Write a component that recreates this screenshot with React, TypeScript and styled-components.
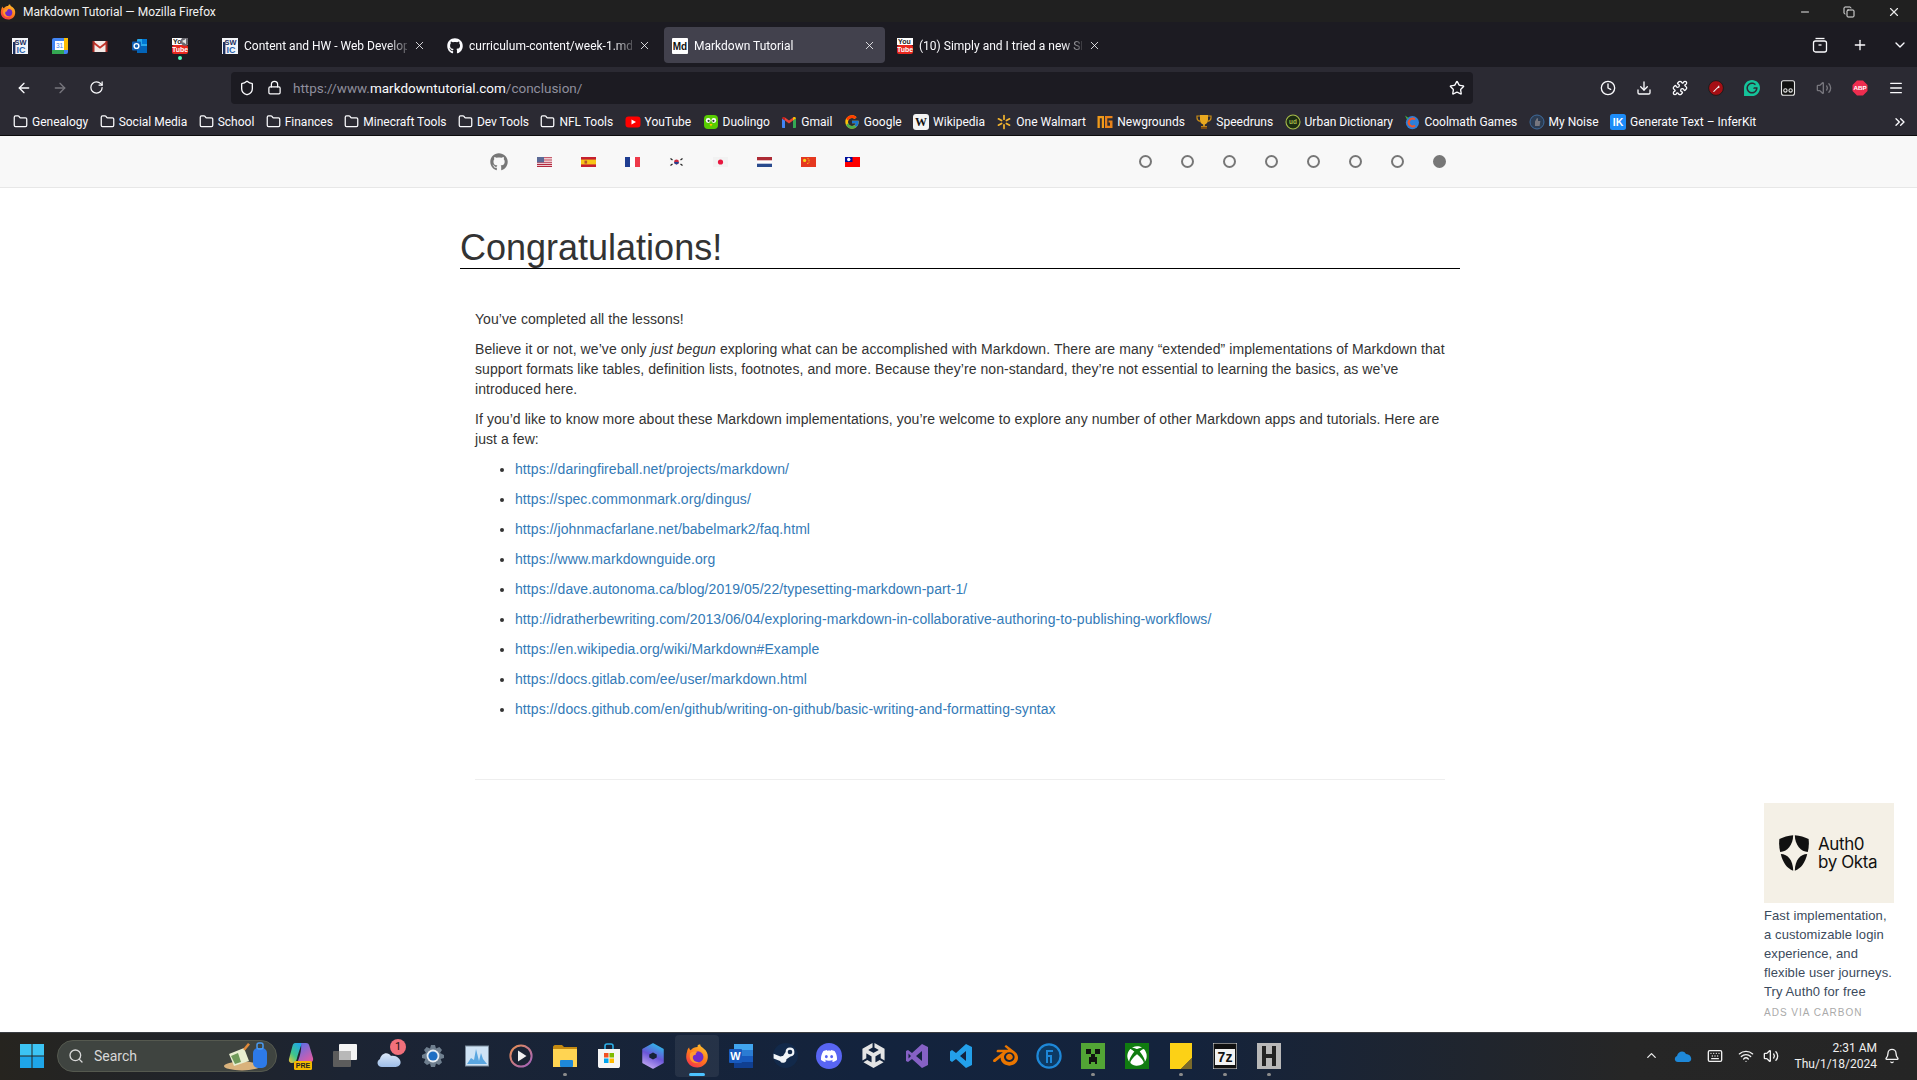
import type { ReactNode } from "react";
import styled, { createGlobalStyle } from "styled-components";
import {
  ArrowLeft,
  ArrowRight,
  Bell,
  ChevronDown,
  ChevronUp,
  ChevronsRight,
  Clock,
  Copy,
  Download,
  Folder,
  Keyboard,
  Lock,
  Menu,
  Minus,
  Plus,
  Puzzle,
  RotateCw,
  Search,
  Shield,
  Star,
  Volume2,
  Wifi,
  X,
} from "lucide-react";
import { FaGithub, FaXbox } from "react-icons/fa";
import { FcGoogle } from "react-icons/fc";
import { SiBlender, SiDiscord, SiGrammarly, SiUnity } from "react-icons/si";

const LINKS = [
  "https://daringfireball.net/projects/markdown/",
  "https://spec.commonmark.org/dingus/",
  "https://johnmacfarlane.net/babelmark2/faq.html",
  "https://www.markdownguide.org",
  "https://dave.autonoma.ca/blog/2019/05/22/typesetting-markdown-part-1/",
  "http://idratherbewriting.com/2013/06/04/exploring-markdown-in-collaborative-authoring-to-publishing-workflows/",
  "https://en.wikipedia.org/wiki/Markdown#Example",
  "https://docs.gitlab.com/ee/user/markdown.html",
  "https://docs.github.com/en/github/writing-on-github/basic-writing-and-formatting-syntax",
];

const DiscordBadge = styled.div`
  width: 26px;
  height: 26px;
  border-radius: 50%;
  background: #5865f2;
  display: flex;
  align-items: center;
  justify-content: center;
`;

const XboxTile = styled.div`
  width: 24px;
  height: 26px;
  background: #107c10;
  display: flex;
  align-items: center;
  justify-content: center;
`;

function Svg({ size = 16, children }: { size?: number; children: ReactNode }) {
  return (
    <svg width={size} height={size} viewBox="0 0 16 16">
      {children}
    </svg>
  );
}

function FirefoxLogo({ size = 16 }: { size?: number }) {
  return (
    <Svg size={size}>
      <defs>
        <linearGradient id="ffBody" x1="0.8" y1="0" x2="0.2" y2="1">
          <stop offset="0" stopColor="#ffc42e" />
          <stop offset="0.5" stopColor="#ff7a1a" />
          <stop offset="1" stopColor="#f5304f" />
        </linearGradient>
      </defs>
      <path d="M1.4 5 C1.6 3.6 2.2 2.8 2.8 2.4 C2.8 3.4 3.2 4 3.8 4.2 C5 2.6 6.6 2 8.4 2 C8 0.8 9 0.4 10.2 0.4 C10 1.4 11 2 12.4 3 C14.4 4.4 15.4 6.6 15.2 9 C15 12.8 12 15.6 8.2 15.6 C4 15.6 0.8 12.4 0.8 8.6 C0.8 7.2 1 6 1.4 5Z" fill="url(#ffBody)" />
      <circle cx="8.6" cy="8.6" r="3.7" fill="#6f2bc9" />
      <path d="M3.6 6 C5 5 6.8 4.8 8.4 5.2 C7.2 5.8 7 6.6 7.2 7.2 C6 7.2 5 8 5.2 9.4 C5.4 11.2 7.4 12.4 9.4 12 C8 13.4 4.8 12.8 3.6 10.4 C3 9 3 7.2 3.6 6Z" fill="#ff9a2e" />
    </Svg>
  );
}

function SwicIcon() {
  return (
    <Svg>
      <rect width="16" height="16" fill="#f2f4f8" />
      <text x="8.5" y="6.6" textAnchor="middle" fontSize="7.4" fontWeight="700" fontFamily="Liberation Sans, sans-serif" fill="#1c2f5e">SW</text>
      <rect x="1" y="4" width="2.4" height="12" fill="#1c2f5e" />
      <text x="9" y="14.6" textAnchor="middle" fontSize="9" fontWeight="700" fontFamily="Liberation Sans, sans-serif" fill="#2b63ad">IC</text>
    </Svg>
  );
}

function CalendarIcon() {
  return (
    <Svg>
      <rect width="16" height="16" rx="2" fill="#4285f4" />
      <rect x="12" width="4" height="12" fill="#fbbc04" />
      <rect y="12" width="12" height="4" fill="#34a853" />
      <rect x="3" y="3" width="9" height="9" fill="#fff" />
      <text x="7.5" y="10.2" textAnchor="middle" fontSize="6.5" fontFamily="Liberation Sans, sans-serif" fill="#4285f4">31</text>
    </Svg>
  );
}

function GmailRedIcon() {
  return (
    <Svg>
      <rect x="1" y="3" width="14" height="11" fill="#f3e9e6" />
      <path d="M1 3 L8 8.6 L15 3 L15 5.4 L8 10.8 L1 5.4Z" fill="#c5352b" />
      <rect x="0.5" y="3" width="2" height="11" fill="#a62c25" />
      <rect x="13.5" y="3" width="2" height="11" fill="#a62c25" />
    </Svg>
  );
}

function OutlookIcon() {
  return (
    <Svg>
      <rect x="5" y="1" width="10" height="14" rx="1" fill="#28a8ea" />
      <rect x="10" y="1" width="5" height="5" fill="#0078d4" />
      <rect x="5" y="8" width="10" height="7" fill="#0364b8" />
      <rect y="3.5" width="9" height="9" rx="1" fill="#0f5fb3" />
      <circle cx="4.5" cy="8" r="2.4" fill="none" stroke="#fff" strokeWidth="1.4" />
    </Svg>
  );
}

function YouTubeOldIcon({ speaker }: { speaker?: boolean }) {
  return (
    <Svg>
      <rect width="16" height="7" fill="#fff" />
      <text x="1" y="6.4" fontSize="7" fontWeight="700" fontFamily="Liberation Sans, sans-serif" fill="#222">You</text>
      <rect y="7" width="16" height="9" rx="2" fill="#e8271e" />
      <text x="8" y="14" textAnchor="middle" fontSize="7" fontWeight="700" fontFamily="Liberation Sans, sans-serif" fill="#fff">Tube</text>
      {speaker && (
        <g>
          <circle cx="13" cy="3.4" r="4.4" fill="#6a6970" />
          <path d="M10.6 2.2 H12 L14 0.6 V6.2 L12 4.6 H10.6Z" fill="#e6e6e6" />
        </g>
      )}
    </Svg>
  );
}

function MdIcon() {
  return (
    <Svg>
      <rect width="16" height="16" rx="1" fill="#fff" />
      <text x="8" y="12" textAnchor="middle" fontSize="10" fontWeight="700" fontFamily="Liberation Sans, sans-serif" fill="#111">Md</text>
    </Svg>
  );
}

function YoutubeBookmark() {
  return (
    <Svg>
      <rect x="0.5" y="2.5" width="15" height="11" rx="3" fill="#f00" />
      <path d="M6.5 5.5 L11 8 L6.5 10.5Z" fill="#fff" />
    </Svg>
  );
}

function DuolingoIcon() {
  return (
    <Svg>
      <rect x="1" y="1" width="14" height="14" rx="4" fill="#58cc02" />
      <circle cx="5.2" cy="6.5" r="2.4" fill="#fff" />
      <circle cx="10.8" cy="6.5" r="2.4" fill="#fff" />
      <circle cx="5.6" cy="6.8" r="1.1" fill="#333" />
      <circle cx="10.4" cy="6.8" r="1.1" fill="#333" />
      <path d="M6.5 10 H9.5 L8 12.5Z" fill="#ffc800" />
    </Svg>
  );
}

function GmailIcon() {
  return (
    <Svg>
      <path d="M1 4.5 L4 6.5 V14 H2 C1.4 14 1 13.6 1 13Z" fill="#4285f4" />
      <path d="M15 4.5 L12 6.5 V14 H14 C14.6 14 15 13.6 15 13Z" fill="#34a853" />
      <path d="M4 6.5 L8 9.5 L12 6.5 V3.5 L8 6.5 L4 3.5Z" fill="#ea4335" />
      <path d="M1 4.5 C1 3 3 2.6 4 3.5 V6.5Z" fill="#c5221f" />
      <path d="M15 4.5 C15 3 13 2.6 12 3.5 V6.5Z" fill="#fbbc04" />
    </Svg>
  );
}

function WikipediaIcon() {
  return (
    <Svg>
      <rect width="16" height="16" rx="3" fill="#f4f4f4" />
      <text x="8" y="12.4" textAnchor="middle" fontSize="12" fontFamily="Liberation Serif, serif" fontWeight="700" fill="#111">W</text>
    </Svg>
  );
}

function WalmartIcon() {
  return (
    <Svg>
      <g stroke="#f5b52e" strokeWidth="1.7" strokeLinecap="round">
        <path d="M8 1.5 V5.2" />
        <path d="M8 10.8 V14.5" />
        <path d="M2.4 4.8 L5.6 6.6" />
        <path d="M10.4 9.4 L13.6 11.2" />
        <path d="M2.4 11.2 L5.6 9.4" />
        <path d="M10.4 6.6 L13.6 4.8" />
      </g>
    </Svg>
  );
}

function NewgroundsIcon() {
  return (
    <Svg>
      <path d="M0.5 2 H7 V14 H4.8 V4.2 H2.8 V14 H0.5Z" fill="#f09a1a" />
      <path d="M8 2 H15.5 V4.2 H10.3 V11.8 H13 V8.5 H11.6 V6.6 H15.5 V14 H8Z" fill="#e8821a" />
    </Svg>
  );
}

function TrophyIcon() {
  return (
    <Svg>
      <path d="M4 1 H12 V6 C12 9 10 10 8.8 10.4 V12 H11 V15 H5 V12 H7.2 V10.4 C6 10 4 9 4 6Z" fill="#e8a820" />
      <path d="M4 2 H1 V4 C1 6 2.4 7 4.4 7.4 M12 2 H15 V4 C15 6 13.6 7 11.6 7.4" fill="none" stroke="#c98c18" strokeWidth="1.2" />
      <rect x="5" y="12.6" width="6" height="2.4" fill="#7a4a12" />
    </Svg>
  );
}

function UrbanIcon() {
  return (
    <Svg>
      <circle cx="8" cy="8" r="7" fill="#1d2d12" stroke="#a7bc4a" strokeWidth="1.1" />
      <text x="8" y="10.4" textAnchor="middle" fontSize="6.4" fontFamily="Liberation Sans, sans-serif" fontWeight="700" fill="#a7bc4a">ud</text>
    </Svg>
  );
}

function CoolmathIcon() {
  return (
    <Svg>
      <circle cx="8.4" cy="8.6" r="6.6" fill="#2d7fd8" />
      <path d="M1 1.5 L4.5 4 L3 5.5Z" fill="#46b04a" />
      <path d="M11 5.6 A3.8 3.8 0 1 0 11 11.4" fill="none" stroke="#f0542a" strokeWidth="2" />
    </Svg>
  );
}

function MyNoiseIcon() {
  return (
    <Svg>
      <circle cx="8" cy="8" r="7" fill="#2c3c52" stroke="#3e6a9c" strokeWidth="1" />
      <path d="M6 12 V7.5 L8 4 L9 4.5 V7 H11.4 L10.6 12Z" fill="#77777f" />
    </Svg>
  );
}

function InferKitIcon() {
  return (
    <Svg>
      <rect width="16" height="16" rx="2.5" fill="#1d8cf8" />
      <text x="8" y="12" textAnchor="middle" fontSize="10.5" fontWeight="700" fontFamily="Liberation Sans, sans-serif" fill="#fff">IK</text>
    </Svg>
  );
}

function PocketIcon() {
  return (
    <Svg>
      <rect x="1.5" y="0.8" width="13" height="14.4" rx="2" fill="#111" stroke="#e8e8e8" strokeWidth="1.1" />
      <circle cx="5.4" cy="10.4" r="1.7" fill="none" stroke="#e8e8e8" strokeWidth="1.1" />
      <circle cx="10.6" cy="10.4" r="1.7" fill="none" stroke="#e8e8e8" strokeWidth="1.1" />
    </Svg>
  );
}

function RedExtensionIcon() {
  return (
    <Svg>
      <circle cx="8" cy="8" r="7.4" fill="#a50e14" stroke="#1c1c1c" strokeWidth="1" />
      <path d="M5 11.5 L9.5 7 L11 5.2 L11.6 7.6 L9.4 8.4 L6 12Z" fill="#f3f3f3" />
    </Svg>
  );
}

function AbpIcon() {
  return (
    <Svg>
      <path d="M5 0.5 H11 L15.5 5 V11 L11 15.5 H5 L0.5 11 V5Z" fill="#ee2d4f" />
      <text x="8" y="10.4" textAnchor="middle" fontSize="6.2" fontWeight="700" fontFamily="Liberation Sans, sans-serif" fill="#fff">ABP</text>
    </Svg>
  );
}

function Flag({ code }: { code: string }) {
  const flags: Record<string, ReactNode> = {
    us: (
      <>
        <rect width="15" height="10" fill="#fff" />
        <path d="M0 0.8 H15 M0 3 H15 M0 5.2 H15 M0 7.4 H15 M0 9.4 H15" stroke="#b3283f" strokeWidth="1.1" />
        <rect width="7" height="5.4" fill="#5c6a96" />
      </>
    ),
    es: (
      <>
        <rect width="15" height="10" fill="#c6202e" />
        <rect y="2.6" width="15" height="4.8" fill="#f7c518" />
        <rect x="3.5" y="3.6" width="2.6" height="3" fill="#b5552a" />
      </>
    ),
    fr: (
      <>
        <rect width="15" height="10" fill="#fff" />
        <rect width="5" height="10" fill="#1f3d91" />
        <rect x="10" width="5" height="10" fill="#ee3a4a" />
      </>
    ),
    kr: (
      <>
        <rect width="15" height="10" fill="#f7f7f7" />
        <circle cx="7.5" cy="5" r="2.4" fill="#c8283e" />
        <path d="M5.1 5 A2.4 2.4 0 0 0 9.9 5Z" fill="#23408f" />
        <path d="M1.5 1.5 L3.5 3 M11.5 3 L13.5 1.5 M1.5 8.5 L3.5 7 M11.5 7 L13.5 8.5" stroke="#222" strokeWidth="1.2" />
      </>
    ),
    jp: (
      <>
        <rect width="15" height="10" fill="#f2f2f2" />
        <circle cx="7.5" cy="5" r="2.6" fill="#e8173f" />
      </>
    ),
    nl: (
      <>
        <rect width="15" height="10" fill="#fff" />
        <rect width="15" height="3.3" fill="#ad2b35" />
        <rect y="6.7" width="15" height="3.3" fill="#2a4b8e" />
      </>
    ),
    cn: (
      <>
        <rect width="15" height="10" fill="#e5381f" />
        <circle cx="3.6" cy="3.4" r="1.6" fill="#f7d618" />
        <circle cx="7" cy="1.6" r="0.6" fill="#f7d618" />
        <circle cx="8" cy="3.2" r="0.6" fill="#f7d618" />
        <circle cx="8" cy="5" r="0.6" fill="#f7d618" />
        <circle cx="6.8" cy="6.4" r="0.6" fill="#f7d618" />
      </>
    ),
    tw: (
      <>
        <rect width="15" height="10" fill="#fe0000" />
        <rect width="7.5" height="5" fill="#000f9c" />
        <circle cx="3.75" cy="2.5" r="1.7" fill="#fff" />
      </>
    ),
  };
  return (
    <svg width="15" height="10" viewBox="0 0 15 10">
      {flags[code]}
    </svg>
  );
}

function Auth0Shield() {
  return (
    <svg width="30" height="36" viewBox="0 0 30 36">
      <path d="M14.2 0.2 C9 0.8 4.4 2 0.4 4 C-0.2 9 0.2 13 1.2 17 C8 16.6 14 10 14.2 0.2Z" fill="#111" />
      <path d="M15.8 0.2 C21 0.8 25.6 2 29.6 4 C30.2 9 29.8 13 28.8 17 C22 16.6 16 10 15.8 0.2Z" fill="#111" />
      <path d="M1.8 19 C8.8 19.2 14 25 14.2 35.8 C8 33.4 3.6 27.4 1.8 19Z" fill="#111" />
      <path d="M28.2 19 C21.2 19.2 16 25 15.8 35.8 C22 33.4 26.4 27.4 28.2 19Z" fill="#111" />
    </svg>
  );
}

const PINNED = [<SwicIcon key="a" />, <CalendarIcon key="b" />, <GmailRedIcon key="c" />, <OutlookIcon key="d" />, <YouTubeOldIcon key="e" speaker />];

const TABS: { title: string; icon: ReactNode; active?: boolean }[] = [
  { title: "Content and HW - Web Develop", icon: <SwicIcon /> },
  { title: "curriculum-content/week-1.md", icon: <FaGithub size={16} color="#fbfbfe" /> },
  { title: "Markdown Tutorial", icon: <MdIcon />, active: true },
  { title: "(10) Simply and I tried a new SM", icon: <YouTubeOldIcon /> },
];

const BOOKMARKS: { label: string; icon: ReactNode }[] = [
  { label: "Genealogy", icon: <Folder size={15} /> },
  { label: "Social Media", icon: <Folder size={15} /> },
  { label: "School", icon: <Folder size={15} /> },
  { label: "Finances", icon: <Folder size={15} /> },
  { label: "Minecraft Tools", icon: <Folder size={15} /> },
  { label: "Dev Tools", icon: <Folder size={15} /> },
  { label: "NFL Tools", icon: <Folder size={15} /> },
  { label: "YouTube", icon: <YoutubeBookmark /> },
  { label: "Duolingo", icon: <DuolingoIcon /> },
  { label: "Gmail", icon: <GmailIcon /> },
  { label: "Google", icon: <FcGoogle size={16} /> },
  { label: "Wikipedia", icon: <WikipediaIcon /> },
  { label: "One Walmart", icon: <WalmartIcon /> },
  { label: "Newgrounds", icon: <NewgroundsIcon /> },
  { label: "Speedruns", icon: <TrophyIcon /> },
  { label: "Urban Dictionary", icon: <UrbanIcon /> },
  { label: "Coolmath Games", icon: <CoolmathIcon /> },
  { label: "My Noise", icon: <MyNoiseIcon /> },
  { label: "Generate Text – InferKit", icon: <InferKitIcon /> },
];

const TASKBAR: { icon: ReactNode; dot?: boolean; active?: boolean; badge?: boolean }[] = [
  {
    icon: (
      <svg width="26" height="30" viewBox="0 0 26 30">
        <defs>
          <linearGradient id="copLeft" x1="0.8" y1="0" x2="0.1" y2="1">
            <stop offset="0" stopColor="#1fa3e8" />
            <stop offset="0.6" stopColor="#3fc68a" />
            <stop offset="1" stopColor="#e8c53a" />
          </linearGradient>
          <linearGradient id="copRight" x1="0.2" y1="0" x2="0.8" y2="1">
            <stop offset="0" stopColor="#5a6fe8" />
            <stop offset="1" stopColor="#e85aa0" />
          </linearGradient>
        </defs>
        <path d="M7 2 H14 C12 7 10 13 8.5 19 C8 21 6 22 4 22 C1.5 22 0.4 20 1 18 L4.6 4.6 C5 3 6 2 7 2Z" fill="url(#copLeft)" />
        <path d="M13 2 H18 C20 2 21 3 21.4 5 L25 17 C25.6 19.6 24 22 21 22 H9 C11 18 14 10 13 2Z" fill="url(#copRight)" />
        <rect x="6" y="20" width="18" height="9" rx="1.5" fill="#f5b800" />
        <text x="15" y="27" textAnchor="middle" fontSize="7" fontWeight="700" fontFamily="Liberation Sans, sans-serif" fill="#222">PRE</text>
      </svg>
    ),
  },
  {
    icon: (
      <svg width="26" height="26" viewBox="0 0 26 26">
        <rect x="7" y="1" width="18" height="16" rx="1" fill="#f4f4f4" />
        <rect x="1" y="8" width="18" height="16" rx="1" fill="#5c5c5c" />
        <rect x="7" y="8" width="12" height="9" fill="#b8b8b8" />
      </svg>
    ),
  },
  {
    badge: true,
    icon: (
      <svg width="26" height="26" viewBox="0 0 26 26">
        <defs>
          <linearGradient id="cloudFill" x1="0" y1="0" x2="0" y2="1">
            <stop offset="0" stopColor="#dbe8f8" />
            <stop offset="1" stopColor="#9dbde8" />
          </linearGradient>
        </defs>
        <path d="M6 24 C1 24 0 18 4 16 C5 10 12 8 15 13 C20 12 25 16 24.6 20 C24 23 21 24 19 24Z" fill="url(#cloudFill)" />
      </svg>
    ),
  },
  {
    icon: (
      <svg width="24" height="24" viewBox="0 0 24 24">
        <path d="M10 1 H14 L15 4.4 L18.4 3 L21 6 L19 9 L23 11 V14 L19.6 15 L21 18.4 L18 21 L15 19.4 L14 23 H10 L9 19.4 L6 21 L3 18.4 L4.4 15 L1 14 V11 L5 9 L3 6 L5.6 3 L9 4.4Z" fill="#6f7f8f" />
        <circle cx="12" cy="12" r="6.4" fill="#e8eef4" />
        <circle cx="12" cy="12" r="4.6" fill="#1f6fc4" />
      </svg>
    ),
  },
  {
    icon: (
      <svg width="24" height="24" viewBox="0 0 24 24">
        <rect x="0.5" y="2" width="23" height="20" fill="#cfe3f5" stroke="#7b8b9c" />
        <path d="M2 20 L6 14 L9 16 L11 5 L14 17 L16 9 L18 15 L22 20Z" fill="#5aa6e0" />
      </svg>
    ),
  },
  {
    icon: (
      <svg width="24" height="24" viewBox="0 0 24 24">
        <defs>
          <linearGradient id="playRing" x1="0" y1="0" x2="1" y2="1">
            <stop offset="0" stopColor="#e89050" />
            <stop offset="1" stopColor="#a060c0" />
          </linearGradient>
        </defs>
        <circle cx="12" cy="12" r="10.6" fill="#1a2333" stroke="url(#playRing)" strokeWidth="2" />
        <path d="M9 6.5 L17.5 12 L9 17.5Z" fill="#f0f0f0" />
      </svg>
    ),
  },
  {
    dot: true,
    icon: (
      <svg width="26" height="26" viewBox="0 0 26 26">
        <path d="M1 4 C1 3 2 2 3 2 H10 L12 4 H25 V24 H1Z" fill="#c58a10" />
        <rect x="1" y="6" width="24" height="18" fill="#ffd452" />
        <rect x="8" y="17" width="13" height="7" rx="1" fill="#1e88d8" />
      </svg>
    ),
  },
  {
    icon: (
      <svg width="24" height="26" viewBox="0 0 24 26">
        <path d="M8 6 V3 C8 1.5 9 1 10 1 H14 C15 1 16 1.5 16 3 V6" fill="none" stroke="#2cb0e8" strokeWidth="1.6" />
        <path d="M1 6 H23 V23 C23 24.4 22 25 21 25 H3 C2 25 1 24.4 1 23Z" fill="#f5f5f5" />
        <rect x="7" y="10" width="4.5" height="4.5" fill="#f25022" />
        <rect x="12.5" y="10" width="4.5" height="4.5" fill="#7fba00" />
        <rect x="7" y="15.5" width="4.5" height="4.5" fill="#00a4ef" />
        <rect x="12.5" y="15.5" width="4.5" height="4.5" fill="#ffb900" />
      </svg>
    ),
  },
  {
    icon: (
      <svg width="24" height="26" viewBox="0 0 24 26">
        <defs>
          <linearGradient id="m365" x1="0.7" y1="0" x2="0.3" y2="1">
            <stop offset="0" stopColor="#2fb6e8" />
            <stop offset="0.5" stopColor="#6a55d8" />
            <stop offset="1" stopColor="#c0a6f2" />
          </linearGradient>
        </defs>
        <path d="M12 1 L22 6.5 V19.5 L12 25 L2 19.5 V6.5Z M12 8.5 L7.5 11 V15 L12 17.5 L16.5 15 V11Z" fill="url(#m365)" fillRule="evenodd" stroke="url(#m365)" strokeWidth="1.5" strokeLinejoin="round" />
      </svg>
    ),
  },
  { active: true, icon: <FirefoxLogo size={24} /> },
  {
    icon: (
      <svg width="26" height="26" viewBox="0 0 26 26">
        <rect x="6" y="1" width="19" height="24" rx="1.5" fill="#2b7cd3" />
        <rect x="6" y="1" width="19" height="6" fill="#41a5ee" />
        <rect x="6" y="13" width="19" height="6" fill="#185abd" />
        <rect x="6" y="19" width="19" height="6" fill="#103f91" />
        <rect x="1" y="6" width="13" height="14" rx="1" fill="#185abd" />
        <text x="7.5" y="17" textAnchor="middle" fontSize="11" fontWeight="700" fontFamily="Liberation Sans, sans-serif" fill="#fff">W</text>
      </svg>
    ),
  },
  {
    icon: (
      <svg width="25" height="25" viewBox="0 0 25 25">
        <circle cx="12.5" cy="12.5" r="12.5" fill="#12294a" />
        <path d="M0.6 15.5 L7 18 A3.4 3.4 0 0 0 13.4 16.2 L17.4 13.4 A4.4 4.4 0 1 0 12.6 9 L10 13 A3.4 3.4 0 0 0 7.4 13.6 L0.6 10.8Z" fill="#f0f4f8" />
        <circle cx="17" cy="9" r="2.3" fill="#12294a" />
      </svg>
    ),
  },
  {
    icon: (
      <DiscordBadge>
        <SiDiscord size={16} color="#fff" />
      </DiscordBadge>
    ),
  },
  { icon: <SiUnity size={25} color="#e4e4e4" /> },
  {
    icon: (
      <svg width="24" height="26" viewBox="0 0 24 26">
        <path d="M17 1 L23 4 V22 L17 25 L7 16 L3 19 L1 18 V8 L3 7 L7 10Z M17 8 L11 13 L17 18Z M3.5 10.5 V15.5 L6 13Z" fill="#8661c5" fillRule="evenodd" />
      </svg>
    ),
  },
  {
    icon: (
      <svg width="24" height="26" viewBox="0 0 24 26">
        <path d="M17 1 L23 4 V22 L17 25 L7 16 L3 19 L1 17.5 V8.5 L3 7 L7 10Z M17 8 L11 13 L17 18Z" fill="#23a0ea" fillRule="evenodd" />
      </svg>
    ),
  },
  { icon: <SiBlender size={25} color="#ea7600" /> },
  {
    icon: (
      <svg width="26" height="26" viewBox="0 0 26 26">
        <circle cx="13" cy="13" r="11.6" fill="#0d3a63" stroke="#1e88d8" strokeWidth="2.2" />
        <path d="M17 8 H11 V20 M11 13 H15 V20" fill="none" stroke="#1e88d8" strokeWidth="2" />
      </svg>
    ),
  },
  {
    dot: true,
    icon: (
      <svg width="24" height="26" viewBox="0 0 24 26">
        <rect width="24" height="26" fill="#52a535" />
        <rect x="5" y="6" width="5" height="5" fill="#111" />
        <rect x="14" y="6" width="5" height="5" fill="#111" />
        <path d="M10 11 H14 V14 H16 V21 H14 V19 H10 V21 H8 V14 H10Z" fill="#111" />
      </svg>
    ),
  },
  {
    icon: (
      <XboxTile>
        <FaXbox size={20} color="#fff" />
      </XboxTile>
    ),
  },
  {
    dot: true,
    icon: (
      <svg width="22" height="26" viewBox="0 0 22 26">
        <path d="M0 0 H22 V15 L11 26 H0Z" fill="#fcd116" />
        <path d="M22 15 V26 H11Z" fill="#7a6a2a" />
      </svg>
    ),
  },
  {
    dot: true,
    icon: (
      <svg width="24" height="26" viewBox="0 0 24 26">
        <rect width="24" height="26" fill="#111" stroke="#eee" />
        <rect x="2" y="6" width="20" height="16" fill="#f2f2f2" />
        <text x="12" y="19" textAnchor="middle" fontSize="14" fontWeight="700" fontFamily="Liberation Sans, sans-serif" fill="#111">7z</text>
      </svg>
    ),
  },
  {
    dot: true,
    icon: (
      <svg width="24" height="26" viewBox="0 0 24 26">
        <rect width="24" height="26" fill="#b8b8b8" />
        <path d="M5 3 H9 V11 H15 V3 H19 V23 H15 V15 H9 V23 H5Z" fill="#222" />
      </svg>
    ),
  },
];

export default function App() {
  return (
    <Screen>
      <GlobalStyle />
      <TitleBar>
        <TitleLeft>
          <FirefoxLogo />
          <span>Markdown Tutorial — Mozilla Firefox</span>
        </TitleLeft>
        <WindowButtons>
          <Minus size={12} />
          <Copy size={12} />
          <X size={14} />
        </WindowButtons>
      </TitleBar>

      <TabBar>
        <Pinned>
          {PINNED.map((icon, i) => (
            <PinnedTab key={i} $playing={i === 4}>
              {icon}
            </PinnedTab>
          ))}
        </Pinned>
        <Tabs>
          {TABS.map((tab) => (
            <Tab key={tab.title} $active={tab.active}>
              {tab.icon}
              <TabTitle>{tab.title}</TabTitle>
              <X size={13} strokeWidth={1.5} />
            </Tab>
          ))}
        </Tabs>
        <TabActions>
          <svg width="16" height="16" viewBox="0 0 16 16" fill="none" stroke="#fbfbfe" strokeWidth="1.3">
            <rect x="1.5" y="4" width="13" height="11" rx="2" />
            <path d="M3.5 1.5 H12.5" />
            <path d="M6.5 8 H9.5" />
          </svg>
          <Plus size={16} />
          <ChevronDown size={16} />
        </TabActions>
      </TabBar>

      <NavBar>
        <NavLeft>
          <NavButton>
            <ArrowLeft size={16} />
          </NavButton>
          <NavButton $disabled>
            <ArrowRight size={16} />
          </NavButton>
          <NavButton>
            <RotateCw size={15} />
          </NavButton>
        </NavLeft>
        <UrlBar>
          <UrlIcons>
            <Shield size={16} />
            <Lock size={15} />
          </UrlIcons>
          <UrlText>
            https://www.<b>markdowntutorial.com</b>/conclusion/
          </UrlText>
          <Star size={16} />
        </UrlBar>
        <NavRight>
          <NavButton>
            <Clock size={16} />
          </NavButton>
          <NavButton>
            <Download size={16} />
          </NavButton>
          <NavButton>
            <Puzzle size={16} />
          </NavButton>
          <NavButton>
            <RedExtensionIcon />
          </NavButton>
          <NavButton>
            <SiGrammarly size={16} color="#15c39a" />
          </NavButton>
          <NavButton>
            <PocketIcon />
          </NavButton>
          <NavButton $disabled>
            <Volume2 size={16} />
          </NavButton>
          <NavButton>
            <AbpIcon />
          </NavButton>
          <NavButton>
            <Menu size={16} />
          </NavButton>
        </NavRight>
      </NavBar>

      <BookmarksBar>
        {BOOKMARKS.map((b) => (
          <Bookmark key={b.label}>
            {b.icon}
            <span>{b.label}</span>
          </Bookmark>
        ))}
        <MoreBookmarks>
          <ChevronsRight size={16} />
        </MoreBookmarks>
      </BookmarksBar>

      <Page>
        <SiteNav>
          <NavLinks>
            <GithubSlot>
              <FaGithub size={18} color="#777" />
            </GithubSlot>
            {["us", "es", "fr", "kr", "jp", "nl", "cn", "tw"].map((code) => (
              <FlagSlot key={code}>
                <Flag code={code} />
              </FlagSlot>
            ))}
          </NavLinks>
          <LessonDots>
            {[0, 1, 2, 3, 4, 5, 6, 7].map((n) => (
              <DotSlot key={n}>
                <Dot $filled={n === 7} />
              </DotSlot>
            ))}
          </LessonDots>
        </SiteNav>

        <Container>
          <Heading>Congratulations!</Heading>
          <Lesson>
            <p>You’ve completed all the lessons!</p>
            <p>
              Believe it or not, we’ve only <em>just begun</em> exploring what can be accomplished with Markdown. There are many “extended” implementations of Markdown that support formats like tables, definition lists, footnotes, and more. Because they’re non-standard, they’re not essential to learning the basics, as we’ve introduced here.
            </p>
            <p>
              If you’d like to know more about these Markdown implementations, you’re welcome to explore any number of other Markdown apps and tutorials. Here are just a few:
            </p>
            <LinkList>
              {LINKS.map((url) => (
                <li key={url}>
                  <a href={url}>{url}</a>
                </li>
              ))}
            </LinkList>
            <Rule />
          </Lesson>
        </Container>

        <CarbonAd>
          <AdImage>
            <Auth0Shield />
            <AdBrand>
              Auth0
              <br />
              by Okta
            </AdBrand>
          </AdImage>
          <AdText>
            Fast implementation, a customizable login experience, and flexible user journeys. Try Auth0 for free
          </AdText>
          <AdCredit>ads via Carbon</AdCredit>
        </CarbonAd>
      </Page>

      <Taskbar>
        <StartButton>
          <svg width="24" height="24" viewBox="0 0 24 24">
            <rect x="0" y="0" width="11.5" height="11.5" fill="#3cc4f4" />
            <rect x="12.5" y="0" width="11.5" height="11.5" fill="#3cc4f4" />
            <rect x="0" y="12.5" width="11.5" height="11.5" fill="#1ea5e8" />
            <rect x="12.5" y="12.5" width="11.5" height="11.5" fill="#1ea5e8" />
          </svg>
        </StartButton>
        <SearchBox>
          <Search size={16} />
          <span>Search</span>
          <SearchArt>
            <svg width="46" height="30" viewBox="0 0 46 30">
              <ellipse cx="18" cy="25" rx="18" ry="4.4" fill="#d9b27c" />
              <path d="M5 13 L20 7 L25 20 L10 25Z" fill="#e8eed0" />
              <path d="M7 15 L14 12 L17 21 L11 23Z" fill="#6f9a5a" />
              <path d="M19 8 L24 2 L26 3.4 L21 9.6Z" fill="#e08a3a" />
              <rect x="29" y="7" width="14" height="20" rx="5" fill="#2d7ae8" />
              <rect x="33" y="2" width="6" height="6" rx="2" fill="none" stroke="#4a9af0" strokeWidth="1.5" />
            </svg>
          </SearchArt>
        </SearchBox>
        <TaskIcons>
          {TASKBAR.map((item, i) => (
            <TaskIcon key={i} $active={item.active} $dot={item.dot}>
              {item.icon}
              {item.badge && <TaskBadge>1</TaskBadge>}
            </TaskIcon>
          ))}
        </TaskIcons>
        <Tray>
          <ChevronUp size={15} />
          <svg width="18" height="14" viewBox="0 0 18 14">
            <path d="M4 13 C0 13 0 8 3 7 C4 2 10 1 12 5 C16 5 18 9 17 11 C16.5 12.5 15 13 14 13Z" fill="#1e88d8" />
          </svg>
          <Keyboard size={16} />
          <Wifi size={16} />
          <TraySpeaker>
            <Volume2 size={16} />
          </TraySpeaker>
        </Tray>
        <Clockface>
          <div>2:31 AM</div>
          <div>Thu/1/18/2024</div>
        </Clockface>
        <BellSlot>
          <Bell size={16} />
        </BellSlot>
      </Taskbar>
    </Screen>
  );
}

const GlobalStyle = createGlobalStyle`
  html, body {
    margin: 0;
    padding: 0;
    background: #fff;
  }
  * {
    box-sizing: border-box;
  }
`;

const Screen = styled.div`
  width: 1917px;
  height: 1080px;
  display: flex;
  flex-direction: column;
  overflow: hidden;
  font-family: Roboto, "Noto Sans", sans-serif;
  font-size: 12px;
  color: #fbfbfe;
`;

const TitleBar = styled.div`
  height: 22px;
  padding-top: 1px;
  background: #202020;
  display: flex;
  align-items: center;
  justify-content: space-between;
  flex-shrink: 0;
`;

const TitleLeft = styled.div`
  display: flex;
  align-items: center;
  gap: 7px;
  color: #f2f2f2;
`;

const WindowButtons = styled.div`
  display: flex;
  align-items: center;
  gap: 32px;
  padding-right: 16px;
  color: #e8e8e8;
`;

const TabBar = styled.div`
  height: 45px;
  padding-top: 1px;
  background: #1c1b22;
  display: flex;
  align-items: center;
  flex-shrink: 0;
`;

const Pinned = styled.div`
  display: flex;
  margin-right: 14px;
`;

const PinnedTab = styled.div<{ $playing?: boolean }>`
  width: 40px;
  height: 36px;
  padding-top: 1px;
  display: flex;
  align-items: center;
  justify-content: center;
  position: relative;
  &::after {
    content: "";
    display: ${(p) => (p.$playing ? "block" : "none")};
    position: absolute;
    bottom: 3px;
    left: 18px;
    width: 4px;
    height: 4px;
    border-radius: 50%;
    background: #54ffbd;
  }
`;

const Tabs = styled.div`
  display: flex;
  gap: 4px;
`;

const Tab = styled.div<{ $active?: boolean }>`
  width: 221px;
  height: 36px;
  padding: 1px 9px 0 8px;
  display: flex;
  align-items: center;
  gap: 6px;
  border-radius: 4px;
  background: ${(p) => (p.$active ? "#42414d" : "transparent")};
  svg {
    flex-shrink: 0;
  }
`;

const TabTitle = styled.div`
  flex: 1;
  min-width: 0;
  white-space: nowrap;
  -webkit-mask-image: linear-gradient(to right, #000 88%, rgba(0, 0, 0, 0.25) 100%);
  mask-image: linear-gradient(to right, #000 88%, rgba(0, 0, 0, 0.25) 100%);
`;

const TabActions = styled.div`
  margin-left: auto;
  display: flex;
  align-items: center;
  gap: 24px;
  padding-right: 9px;
`;

const NavBar = styled.div`
  height: 41px;
  background: #2b2a33;
  display: flex;
  align-items: center;
  flex-shrink: 0;
`;

const NavLeft = styled.div`
  width: 231px;
  padding-left: 6px;
  display: flex;
`;

const NavRight = styled.div`
  margin-left: auto;
  padding-right: 3px;
  display: flex;
`;

const NavButton = styled.div<{ $disabled?: boolean }>`
  width: 36px;
  display: flex;
  align-items: center;
  justify-content: center;
  color: ${(p) => (p.$disabled ? "#77767d" : "#fbfbfe")};
`;

const UrlBar = styled.div`
  width: 1242px;
  height: 32px;
  background: #1c1b22;
  border-radius: 4px;
  display: flex;
  align-items: center;
  padding: 0 8px;
`;

const UrlIcons = styled.div`
  display: flex;
  align-items: center;
  gap: 12px;
`;

const UrlText = styled.div`
  flex: 1;
  padding-left: 11px;
  font-size: 13.5px;
  color: #8f8f9d;
  b {
    font-weight: 400;
    color: #fbfbfe;
  }
`;

const BookmarksBar = styled.div`
  height: 27px;
  background: #2b2a33;
  display: flex;
  align-items: center;
  gap: 11.4px;
  padding-left: 13px;
  flex-shrink: 0;
`;

const Bookmark = styled.div`
  display: flex;
  align-items: center;
  gap: 4px;
  white-space: nowrap;
  svg {
    flex-shrink: 0;
  }
`;

const MoreBookmarks = styled.div`
  margin-left: auto;
  padding-right: 9px;
  display: flex;
`;

const Page = styled.main`
  flex: 1;
  position: relative;
  background: #fff;
  border-top: 1px solid #0c0c0d;
  min-height: 0;
  font-family: "Liberation Sans", Arial, sans-serif;
  font-size: 14px;
  line-height: 20px;
  color: #333;
`;

const SiteNav = styled.nav`
  height: 52px;
  background: #f8f8f8;
  border-bottom: 1px solid #e7e7e7;
  padding: 0 457px 0 476px;
  display: flex;
  align-items: center;
  justify-content: space-between;
`;

const NavLinks = styled.div`
  display: flex;
  align-items: center;
`;

const GithubSlot = styled.div`
  width: 46px;
  display: flex;
  justify-content: center;
`;

const FlagSlot = styled.div`
  width: 44px;
  display: flex;
  justify-content: center;
  line-height: 0;
`;

const LessonDots = styled.div`
  display: flex;
`;

const DotSlot = styled.div`
  width: 42px;
  display: flex;
  justify-content: center;
`;

const Dot = styled.span<{ $filled?: boolean }>`
  width: 13px;
  height: 13px;
  border-radius: 50%;
  border: 2px solid #777;
  background: ${(p) => (p.$filled ? "#777" : "transparent")};
`;

const Container = styled.div`
  width: 1000px;
  margin-left: 460px;
`;

const Heading = styled.h1`
  margin: 40px 0 0;
  font-size: 36px;
  font-weight: 400;
  line-height: 40px;
  border-bottom: 1px solid #000;
`;

const Lesson = styled.div`
  padding: 40px 15px 0;
  letter-spacing: 0.07px;
  p {
    margin: 0 0 10px;
  }
`;

const LinkList = styled.ul`
  margin: 0;
  padding-left: 40px;
  li {
    margin-bottom: 10px;
  }
  a {
    color: #337ab7;
    text-decoration: none;
  }
`;

const Rule = styled.hr`
  margin: 60px 0 0;
  border: 0;
  border-top: 1px solid #eee;
`;

const CarbonAd = styled.aside`
  position: absolute;
  left: 1764px;
  top: 667px;
  width: 130px;
`;

const AdImage = styled.div`
  width: 130px;
  height: 100px;
  padding-left: 15px;
  background: #f4f0e6;
  display: flex;
  align-items: center;
  gap: 9px;
`;

const AdBrand = styled.div`
  font-family: Inter, sans-serif;
  font-size: 17px;
  line-height: 18px;
  letter-spacing: -0.4px;
  color: #111;
`;

const AdText = styled.div`
  margin-top: 3px;
  font-size: 13px;
  line-height: 19px;
  letter-spacing: 0.1px;
  color: #3b4a5c;
`;

const AdCredit = styled.div`
  margin-top: 5px;
  font-size: 10px;
  line-height: 14px;
  letter-spacing: 1px;
  text-transform: uppercase;
  color: #aaa;
`;

const Taskbar = styled.footer`
  height: 48px;
  padding-bottom: 2px;
  flex-shrink: 0;
  display: flex;
  align-items: center;
  border-top: 1px solid #3a3d42;
  background: linear-gradient(90deg, #26241f 0%, #1c2433 18%, #13233d 45%, #14233c 62%, #262626 85%, #252525 100%);
  position: relative;
`;

const StartButton = styled.div`
  width: 57px;
  display: flex;
  justify-content: center;
  padding-left: 7px;
`;

const SearchBox = styled.div`
  width: 220px;
  height: 32px;
  border-radius: 16px;
  background: #3f4440;
  border: 1px solid #55594f;
  display: flex;
  align-items: center;
  padding-left: 10px;
  gap: 10px;
  font-size: 14px;
  color: #d8d8d8;
  position: relative;
`;

const SearchArt = styled.div`
  position: absolute;
  right: 6px;
  top: 0;
`;

const TaskIcons = styled.div`
  display: flex;
  margin-left: 2px;
`;

const TaskIcon = styled.div<{ $active?: boolean; $dot?: boolean }>`
  width: 44px;
  height: 42px;
  display: flex;
  align-items: center;
  justify-content: center;
  position: relative;
  border-radius: 4px;
  background: ${(p) => (p.$active ? "rgba(255,255,255,0.07)" : "transparent")};
  &::after {
    content: "";
    display: ${(p) => (p.$active || p.$dot ? "block" : "none")};
    position: absolute;
    bottom: 1px;
    left: ${(p) => (p.$active ? "14px" : "20px")};
    width: ${(p) => (p.$active ? "16px" : "4px")};
    height: 3px;
    border-radius: 2px;
    background: ${(p) => (p.$active ? "#4cc2ff" : "#8b8b8b")};
  }
`;

const TaskBadge = styled.span`
  position: absolute;
  top: 4px;
  left: 23px;
  width: 16px;
  height: 16px;
  border-radius: 50%;
  background: #f1707b;
  color: #111;
  font-size: 11px;
  line-height: 16px;
  text-align: center;
`;

const Tray = styled.div`
  position: absolute;
  left: 1644px;
  display: flex;
  align-items: center;
  gap: 15px;
  color: #f0f0f0;
`;

const TraySpeaker = styled.div`
  display: flex;
  margin-left: -6px;
`;

const Clockface = styled.div`
  position: absolute;
  right: 40px;
  text-align: right;
  font-size: 12px;
  line-height: 16px;
  color: #f0f0f0;
`;

const BellSlot = styled.div`
  position: absolute;
  right: 17px;
  display: flex;
  color: #f0f0f0;
`;
